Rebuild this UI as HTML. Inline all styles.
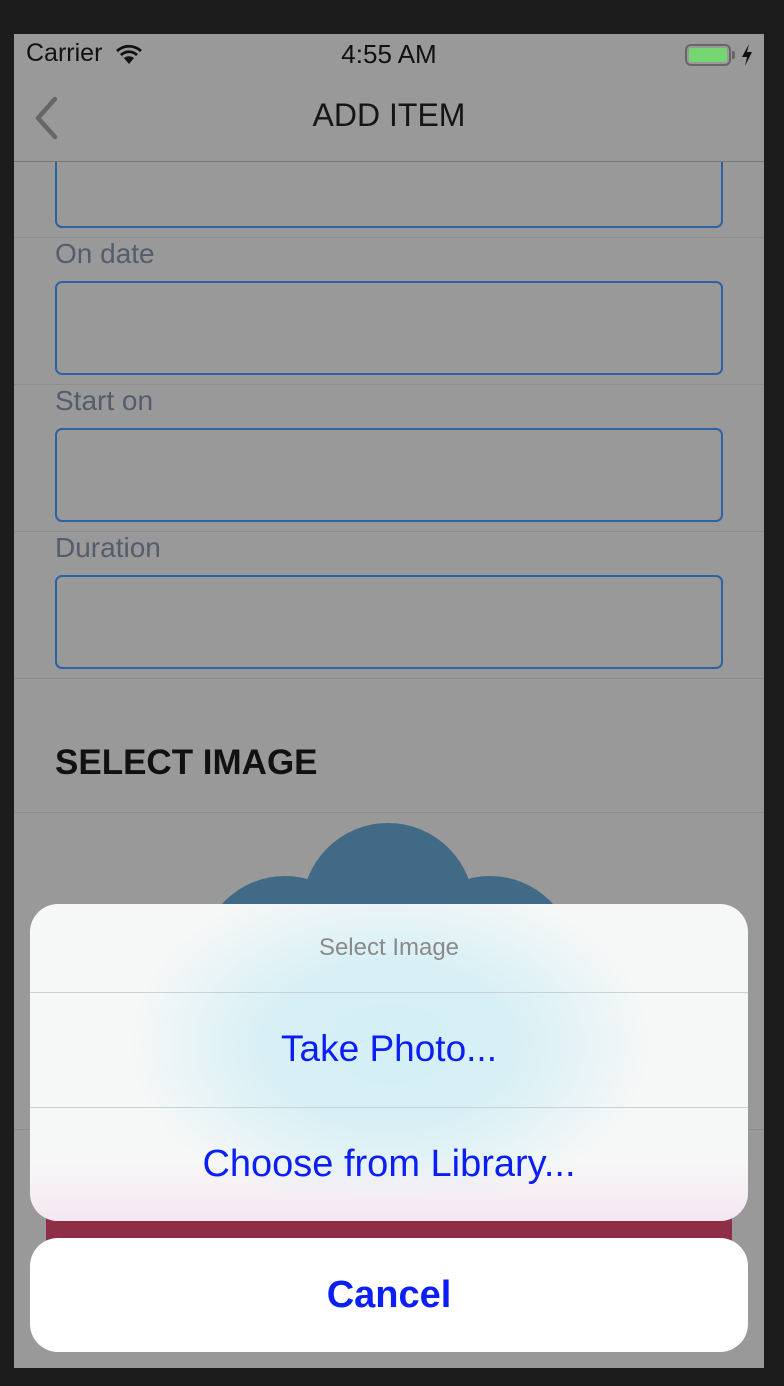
<!DOCTYPE html>
<html><head><meta charset="utf-8"><style>
*{margin:0;padding:0;box-sizing:border-box}
body{width:784px;height:1386px;background:#1c1c1c;position:relative;overflow:hidden;font-family:"Liberation Sans",sans-serif}
.scr{position:absolute;left:14px;top:34px;width:750px;height:1334px;background:#999;overflow:hidden}
.a{position:absolute}
.hl{position:absolute;left:0;width:750px;height:1px;background:#8d8d8d}
.box{position:absolute;left:41px;width:668px;height:94px;border:2px solid #2d62a3;border-radius:7px}
.lbl{position:absolute;left:41px;font-size:28px;color:#545d6e}
</style></head><body>
<div class="scr">
 <div class="box" style="top:100px"></div>
 <div class="a" style="left:0;top:0;width:750px;height:127px;background:#999"></div>
 <div class="a" style="left:12px;top:5px;font-size:25px;color:#111">Carrier</div>
 <svg class="a" style="left:100px;top:8px" width="30" height="24" viewBox="0 0 30 24"><path d="M15 22 L10 16 A8 8 0 0 1 20 16Z M15 22 L6 12 A13 13 0 0 1 24 12 L22 14 A10 10 0 0 0 8 14Z M15 22 L2 8 A19 19 0 0 1 28 8 L26 10 A16 16 0 0 0 4 10Z" fill="#111"/></svg>
 <div class="a" style="left:0;width:750px;top:5px;text-align:center;font-size:26px;color:#111">4:55 AM</div>
 <div class="a" style="left:671px;top:10px;width:46px;height:22px;border:2px solid #666;border-radius:6px;padding:2px"><div style="width:100%;height:100%;background:#76d672;border-radius:2px"></div></div>
 <div class="a" style="left:718px;top:17px;width:3px;height:8px;background:#666;border-radius:0 2px 2px 0"></div>
 <svg class="a" style="left:727px;top:10px" width="12" height="22" viewBox="0 0 12 22"><path d="M8 0 L1 13 H6 L4 22 L11 8 H6Z" fill="#111"/></svg>
 <svg class="a" style="left:18px;top:62px" width="28" height="44" viewBox="0 0 28 44"><path d="M23 3 L6 22 L23 41" stroke="#666" stroke-width="4.5" fill="none" stroke-linecap="round" stroke-linejoin="round"/></svg>
 <div class="a" style="left:0;width:750px;top:63px;text-align:center;font-size:32px;color:#151515">ADD ITEM</div>
 <div class="hl" style="top:127px;background:#777"></div>
 <div class="hl" style="top:203px"></div>
 <div class="lbl" style="top:204px">On date</div>
 <div class="box" style="top:247px"></div>
 <div class="hl" style="top:350px"></div>
 <div class="lbl" style="top:351px">Start on</div>
 <div class="box" style="top:394px"></div>
 <div class="hl" style="top:497px"></div>
 <div class="lbl" style="top:498px">Duration</div>
 <div class="box" style="top:541px"></div>
 <div class="hl" style="top:644px"></div>
 <div class="a" style="left:41px;top:709px;font-size:35px;font-weight:bold;color:#111">SELECT IMAGE</div>
 <div class="hl" style="top:778px"></div>
 <svg class="a" style="left:0;top:780px" width="750" height="400"><g fill="#416a86" transform="translate(0,-780)"><circle cx="374" cy="875" r="86"/><circle cx="271" cy="927" r="85"/><circle cx="476" cy="927" r="85"/><rect x="186" y="920" width="376" height="200"/></g></svg>
 <div class="hl" style="top:1095px"></div>
 <div class="a" style="left:32px;top:1150px;width:686px;height:70px;background:#8e2e47"></div>
 <div class="a" style="left:16px;top:870px;width:718px;height:317px;border-radius:28px;overflow:hidden;background:radial-gradient(ellipse 260px 170px at 360px 140px,#d3eff5 0%,#d8f0f5 50%,#f6f7f7 100%)">
  <div class="a" style="left:0;bottom:0;width:100%;height:60px;background:linear-gradient(rgba(245,232,240,0),rgba(245,230,240,.9))"></div>
  <div class="a" style="left:0;width:100%;top:30px;text-align:center;font-size:24px;color:#8a8a8a">Select Image</div>
  <div class="a" style="left:0;width:100%;top:88px;height:1px;background:#c4d4d8"></div>
  <div class="a" style="left:0;width:100%;top:124px;text-align:center;font-size:37px;color:#0a1ef5">Take Photo...</div>
  <div class="a" style="left:0;width:100%;top:203px;height:1px;background:#c4d4d8"></div>
  <div class="a" style="left:0;width:100%;top:239px;text-align:center;font-size:38px;color:#0a1ef5">Choose from Library...</div>
 </div>
 <div class="a" style="left:16px;top:1204px;width:718px;height:114px;border-radius:28px;background:#fff;text-align:center;line-height:114px;font-size:38px;font-weight:bold;color:#0a1ef5">Cancel</div>
</div>
</body></html>
